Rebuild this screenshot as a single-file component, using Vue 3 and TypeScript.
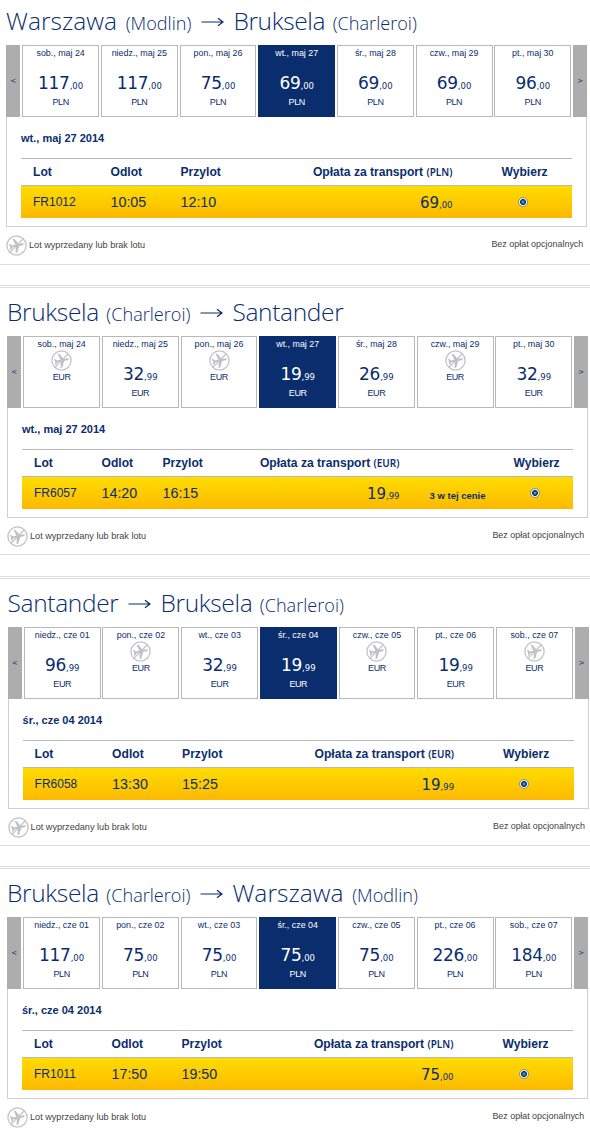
<template>
  <div class="page">
    <section v-for="(leg, i) in legs" :key="i" class="leg" :class="'leg-' + (i + 1)">
      <h2 class="route">
        <span class="city" :class="{ loose: leg.from === 'Warszawa' }">{{ leg.from }}</span>
        <span v-if="leg.fromAirport" class="airport">({{ leg.fromAirport }})</span>
        <svg class="arrow" width="23" height="10" viewBox="0 0 23 10">
          <path d="M0.5 5H21.5M17 1.2L22 5L17 8.8" />
        </svg>
        <span class="city" :class="{ loose: leg.to === 'Warszawa' }">{{ leg.to }}</span>
        <span v-if="leg.toAirport" class="airport">({{ leg.toAirport }})</span>
      </h2>

      <div class="box">
        <div class="days">
          <button class="nav">&lt;</button>
          <div
            v-for="(day, index) in leg.days"
            :key="index"
            class="day"
            :class="{ active: index === leg.selected }"
            @click="selectDay(leg, index)"
          >
            <div class="date">{{ day.date }}</div>
            <div v-if="day.price" class="price">{{ whole(day.price) }}<small>,{{ cents(day.price) }}</small></div>
            <svg v-else class="no-flight" viewBox="0 0 21 21">
              <circle cx="10.5" cy="10.5" r="9.6" />
              <path class="plane" :d="planePath" transform="rotate(-12 10.5 10.5)" />
              <path d="M17.3 3.8L3.9 17.4" />
            </svg>
            <div class="currency">{{ leg.currency }}</div>
          </div>
          <button class="nav">&gt;</button>
        </div>

        <div class="details">
          <h3>{{ leg.days[leg.selected].date }} 2014</h3>
          <div class="row head" :class="{ wide: leg.seats }">
            <span class="flight">Lot</span>
            <span class="dep">Odlot</span>
            <span class="arr">Przylot</span>
            <span class="fare">Opłata za transport <small>({{ leg.currency }})</small></span>
            <span class="seats"></span>
            <span class="pick">Wybierz</span>
          </div>
          <div class="row body" :class="{ wide: leg.seats }">
            <span class="flight">{{ leg.flight }}</span>
            <span class="dep">{{ leg.departure }}</span>
            <span class="arr">{{ leg.arrival }}</span>
            <span class="fare">{{ whole(leg.fare) }}<small>,{{ cents(leg.fare) }}</small></span>
            <span class="seats">{{ leg.seats }}</span>
            <span class="pick"><i class="radio"></i></span>
          </div>
        </div>
      </div>

      <div class="legend">
        <svg class="no-flight" viewBox="0 0 21 21">
          <circle cx="10.5" cy="10.5" r="9.6" />
          <path class="plane" :d="planePath" transform="rotate(-12 10.5 10.5)" />
          <path d="M17.3 3.8L3.9 17.4" />
        </svg>
        <span class="sold-out">Lot wyprzedany lub brak lotu</span>
        <span class="fees">Bez opłat opcjonalnych</span>
      </div>
    </section>
  </div>
</template>

<script lang="ts" setup>
import { ref } from 'vue'

interface Day {
  date: string
  price: string
}

interface Leg {
  from: string
  fromAirport: string
  to: string
  toAirport: string
  currency: string
  days: Day[]
  selected: number
  flight: string
  departure: string
  arrival: string
  fare: string
  seats: string
}

const planePath =
  'M18.4 10.5 L16.6 9.4 L13 9.4 L9.8 3.4 L8 3.4 L9.6 9.5 L6.2 9.7 L4.6 7.6 L3.2 7.6 L4.1 10.5 L3.2 13.4 L4.6 13.4 L6.2 11.3 L9.6 11.5 L8 17.6 L9.8 17.6 L13 11.6 L16.6 11.6 Z'

// empty price = no flight that day
const makeDays = (dates: string[], prices: string[]): Day[] =>
  dates.map((date, i) => ({ date, price: prices[i] }))

const mayDates = ['sob., maj 24', 'niedz., maj 25', 'pon., maj 26', 'wt., maj 27', 'śr., maj 28', 'czw., maj 29', 'pt., maj 30']
const juneDates = ['niedz., cze 01', 'pon., cze 02', 'wt., cze 03', 'śr., cze 04', 'czw., cze 05', 'pt., cze 06', 'sob., cze 07']

const legs = ref<Leg[]>([
  {
    from: 'Warszawa', fromAirport: 'Modlin', to: 'Bruksela', toAirport: 'Charleroi', currency: 'PLN',
    days: makeDays(mayDates, ['117,00', '117,00', '75,00', '69,00', '69,00', '69,00', '96,00']),
    selected: 3, flight: 'FR1012', departure: '10:05', arrival: '12:10', fare: '69,00', seats: ''
  },
  {
    from: 'Bruksela', fromAirport: 'Charleroi', to: 'Santander', toAirport: '', currency: 'EUR',
    days: makeDays(mayDates, ['', '32,99', '', '19,99', '26,99', '', '32,99']),
    selected: 3, flight: 'FR6057', departure: '14:20', arrival: '16:15', fare: '19,99', seats: '3 w tej cenie'
  },
  {
    from: 'Santander', fromAirport: '', to: 'Bruksela', toAirport: 'Charleroi', currency: 'EUR',
    days: makeDays(juneDates, ['96,99', '', '32,99', '19,99', '', '19,99', '']),
    selected: 3, flight: 'FR6058', departure: '13:30', arrival: '15:25', fare: '19,99', seats: ''
  },
  {
    from: 'Bruksela', fromAirport: 'Charleroi', to: 'Warszawa', toAirport: 'Modlin', currency: 'PLN',
    days: makeDays(juneDates, ['117,00', '75,00', '75,00', '75,00', '75,00', '226,00', '184,00']),
    selected: 3, flight: 'FR1011', departure: '17:50', arrival: '19:50', fare: '75,00', seats: ''
  }
])

const whole = (price: string) => price.split(',')[0]
const cents = (price: string) => price.split(',')[1]

const selectDay = (leg: Leg, index: number) => {
  if (leg.days[index].price) {
    leg.selected = index
  }
}
</script>

<style>
body {
  margin: 0;
  background: #fff;
}
</style>

<style scoped>
.page {
  width: 590px;
  height: 1130px;
  overflow: hidden;
  font-family: "Liberation Sans", Arial, sans-serif;
  color: #0a2d6e;
}

.leg {
  box-sizing: border-box;
  height: 270px;
  margin-bottom: 21px;
  padding-left: 7px;
  border-top: 1px solid #dedede;
  border-bottom: 1px solid #dedede;
}

.leg::before {
  content: "";
  display: block;
  height: 1px;
  margin: 1px 0 0 -8px;
  background: #dedede;
}

.leg-1 {
  height: 265px;
  margin-bottom: 20px;
  padding-left: 6px;
  border-top: none;
}

.leg-1::before {
  display: none;
}

.leg-3 {
  padding-left: 7.6px;
  margin-bottom: 20px;
}

.leg-4 {
  border-bottom: none;
}

.route {
  display: flex;
  align-items: baseline;
  box-sizing: border-box;
  height: 48px;
  margin: 0;
  padding-top: 6px;
  font-family: "Open Sans", "Noto Sans", sans-serif;
  font-weight: 300;
  line-height: 36px;
  white-space: nowrap;
}

.leg-1 .route {
  height: 45px;
  padding-top: 3px;
}

.city {
  font-size: 24.5px;
  letter-spacing: -0.35px;
}

.city.loose {
  letter-spacing: 0.05px;
}

.airport {
  margin-left: 7.5px;
  font-size: 18.1px;
}

.loose + .airport {
  margin-left: 8.5px;
}

.arrow {
  margin: 0 9px 0 10px;
  fill: none;
  stroke: #0a2d6e;
  stroke-width: 1.2;
  position: relative;
  top: -3px;
}

.box {
  box-sizing: border-box;
  width: 581.4px;
  height: 182px;
  border: 1px solid #d0d0d0;
  border-top: none;
}

.days {
  display: flex;
  gap: 1.8px;
  height: 72px;
  margin: 0 -1px;
}

.nav {
  width: 14.4px;
  padding: 0;
  border: none;
  background: #adadad;
  color: #0a2d6e;
  font: 7px "DejaVu Sans", Verdana, sans-serif;
}

.day {
  box-sizing: border-box;
  flex: 1;
  min-width: 0;
  border: 1px solid #b8b8b8;
  text-align: center;
  cursor: pointer;
}

.day.active {
  background: #0a2d6e;
  border-color: #0a2d6e;
  color: #fff;
}

.date {
  height: 13px;
  line-height: 14px;
  font-size: 8.9px;
  white-space: nowrap;
}

.price {
  height: 36px;
  line-height: 48px;
  font-family: "DejaVu Sans", Verdana, sans-serif;
  font-size: 17px;
  letter-spacing: -0.3px;
}

.price small {
  font-size: 8.5px;
  letter-spacing: 0;
}

.no-flight {
  display: block;
  flex: none;
  width: 21px;
  height: 21px;
  margin: 0 auto;
  fill: none;
  stroke: #c4c4c9;
  stroke-width: 1.3;
}

.no-flight .plane {
  fill: #c0c0c8;
  stroke: none;
}

.day .no-flight {
  margin-bottom: -1.5px;
}

.currency {
  line-height: 14px;
  font-size: 9px;
  letter-spacing: -0.4px;
}

.details {
  padding: 14px 14px 0;
}

.details h3 {
  height: 27px;
  margin: 0;
  line-height: 14px;
  font-size: 11px;
}

.row {
  display: grid;
  grid-template-columns: 77.5px 70px 90px 182px 0 1fr;
  align-items: center;
  padding-left: 12px;
  white-space: nowrap;
}

.row.wide {
  grid-template-columns: 67.5px 61px 76px 161px 86px 1fr;
}

.head {
  height: 26px;
  border-top: 1px solid #b8b8b8;
  border-bottom: 1px solid #b8b8b8;
  font-size: 12.1px;
  font-weight: bold;
}

.head small {
  font-family: "Noto Sans", sans-serif;
  font-size: 10px;
  font-weight: 600;
}

.fare {
  text-align: right;
}

.body {
  height: 32px;
  background: linear-gradient(#ffdc00, #fdb900);
}

.body .flight {
  font-size: 12px;
}

.body .dep,
.body .arr {
  font-size: 14.3px;
}

.body .fare {
  padding-top: 2px;
  font-family: "DejaVu Sans", Verdana, sans-serif;
  font-size: 15px;
}

.body .fare small {
  font-size: 8.5px;
}

.seats {
  padding-top: 4px;
  text-align: right;
  font-size: 9.5px;
  font-weight: bold;
}

.pick {
  padding-left: 49px;
}

.wide .pick {
  padding-left: 28px;
}

.radio {
  display: block;
  box-sizing: border-box;
  width: 10px;
  height: 10px;
  margin-left: 16px;
  border: 1px solid #8e8f8f;
  border-radius: 50%;
  background: radial-gradient(circle, #56c3ea 0, #1a5b88 1.6px, #0c2f50 2.6px, #f4f4f4 3.3px);
}

.legend {
  display: flex;
  width: 577.3px;
  padding-top: 8px;
  font-size: 9.15px;
  line-height: 21px;
  color: #444;
}

.legend .no-flight {
  margin: 0 2px 0 0;
}

.fees {
  margin: -1px 0 0 auto;
  font-size: 8.95px;
}
</style>
